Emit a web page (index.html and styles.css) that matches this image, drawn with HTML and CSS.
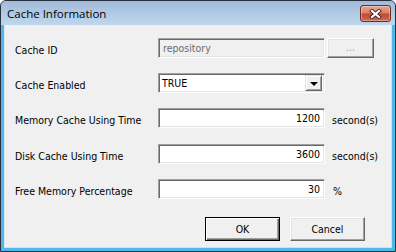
FILE: index.html
```html
<!DOCTYPE html>
<html>
<head>
<meta charset="utf-8">
<link rel="stylesheet" href="styles.css">
</head>
<body>
<div class="window">
  <div class="titlebar">
    <span class="title">Cache Information</span>
    <div class="close">
      <svg width="13" height="10" viewBox="0 0 13 10">
        <path d="M3 2 L10 8 M10 2 L3 8" stroke="#4a2a26" stroke-width="4" stroke-linecap="square" fill="none"/>
        <path d="M3 2 L10 8 M10 2 L3 8" stroke="#fff" stroke-width="2.2" stroke-linecap="square" fill="none"/>
      </svg>
    </div>
  </div>
  <div class="client">
    <div class="form">
      <span class="label">Cache ID</span>
      <div class="field disabled">repository</div>
      <div class="btn browse">...</div>

      <span class="label">Cache Enabled</span>
      <div class="field combo"><span class="combo-text">TRUE</span><span class="drop"><span class="arrow"></span></span></div>
      <span></span>

      <span class="label">Memory Cache Using Time</span>
      <div class="field num">1200</div>
      <span class="unit">second(s)</span>

      <span class="label">Disk Cache Using Time</span>
      <div class="field num">3600</div>
      <span class="unit">second(s)</span>

      <span class="label">Free Memory Percentage</span>
      <div class="field num">30</div>
      <span class="unit pct">%</span>
    </div>
    <div class="actions">
      <div class="btn default">OK</div>
      <div class="btn">Cancel</div>
    </div>
  </div>
</div>
</body>
</html>
```
FILE: styles.css
```css
* { box-sizing: border-box; }
body { margin: 0; background: #fff; }

.window {
  width: 396px;
  height: 252px;
  border: 1px solid #27313d;
  border-radius: 6px 6px 0 0;
  background: #4fb8ea;
  display: flex;
  flex-direction: column;
  padding: 0 3px 3px 3px;
  overflow: hidden;
}

.titlebar {
  height: 24px;
  margin: 0 -3px;
  display: flex;
  align-items: center;
  padding: 0 4px 0 6px;
  background: linear-gradient(#a0bad8, #b2cbe6 55%, #bed5ed);
}
.title {
  flex: 1;
  font-family: "Open Sans", sans-serif;
  font-size: 11.5px;
  color: #000;
  padding-top: 1px;
}
.close {
  align-self: flex-start;
  margin-top: 4px;
  width: 31px;
  height: 17px;
  border: 1px solid #6a2c25;
  border-radius: 3px;
  background: linear-gradient(#e6a797, #d77f6a 45%, #c24a32 55%, #cf6a50);
  box-shadow: inset 0 0 0 1px rgba(255,255,255,0.35);
  display: flex;
  align-items: center;
  justify-content: center;
}

.client {
  flex: 1;
  background: #f0f0f0;
  border-left: 1px solid #dbe7f4;
  border-right: 1px solid #cfe0f1;
  border-bottom: 1px solid #cfe0f1;
  display: flex;
  flex-direction: column;
  padding: 13px 0 0 10px;
  font-family: "DejaVu Sans Condensed", "DejaVu Sans", sans-serif;
  font-stretch: condensed;
  font-size: 10.5px;
  color: #000;
}

.form {
  display: grid;
  grid-template-columns: 143px 167px auto;
  grid-template-rows: 20px 20px 21px 20px 20px;
  row-gap: 15px;
  align-items: start;
}
.label { padding-top: 5px; line-height: 14px; white-space: nowrap; }
.unit { padding-top: 5px; line-height: 14px; padding-left: 7px; }
.unit.pct { padding-left: 8px; }

.field {
  height: 20px;
  border: 1px solid;
  border-color: #a0a0a0 #fff #fff #a0a0a0;
  box-shadow: inset 1px 1px 0 #696969, inset -1px -1px 0 #e3e3e3;
  background: #fff;
  padding: 0 4px;
  line-height: 18px;
  white-space: nowrap;
}
.field.disabled { background: #f0f0f0; color: #6d6d6d; }
.field.num { text-align: right; }
.field.combo {
  display: flex;
  align-items: center;
  padding: 0 2px 0 3px;
}
.combo-text { flex: 1; }
.drop {
  width: 17px;
  height: 16px;
  background: #f0f0f0;
  border: 1px solid;
  border-color: #e3e3e3 #696969 #696969 #e3e3e3;
  box-shadow: inset 1px 1px 0 #fff, inset -1px -1px 0 #a0a0a0;
  display: flex;
  align-items: center;
  justify-content: center;
}
.arrow {
  width: 0; height: 0;
  border-left: 4px solid transparent;
  border-right: 4px solid transparent;
  border-top: 4px solid #000;
  margin-top: 1px;
}

.btn {
  height: 24px;
  width: 75px;
  background: #f0f0f0;
  border: 1px solid;
  border-color: #fff #696969 #696969 #fff;
  box-shadow: inset -1px -1px 0 #a0a0a0, inset 1px 1px 0 #e3e3e3;
  display: flex;
  align-items: center;
  justify-content: center;
  line-height: 14px;
}
.btn.default {
  border: 1px solid #000;
  box-shadow: inset 1px 1px 0 #fff, inset -1px -1px 0 #696969, inset -2px -2px 0 #a0a0a0;
}
.btn.browse {
  width: 47px;
  height: 20px;
  margin-left: 2px;
  color: #a0a0a0;
  padding-bottom: 2px;
}

.actions {
  display: flex;
  justify-content: flex-end;
  gap: 10px;
  margin-top: 18px;
  padding-right: 26px;
}
```
